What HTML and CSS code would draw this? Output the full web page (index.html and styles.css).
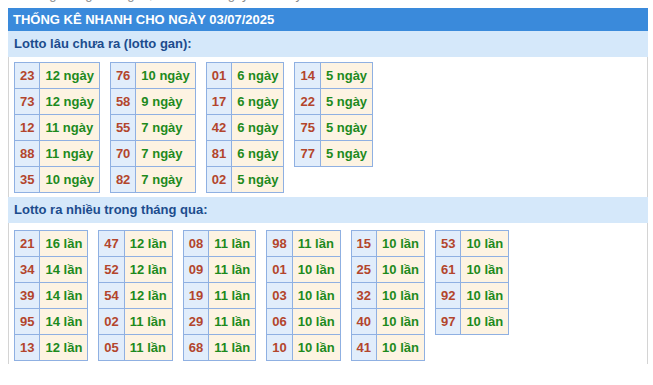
FILE: index.html
```html
<!DOCTYPE html>
<html lang="vi">
<head>
<meta charset="utf-8">
<title>Thống kê nhanh</title>
<link rel="stylesheet" href="styles.css">
</head>
<body>
<div class="crumb">Bảng thống kê lô gan, lô ra nhiều ngày hôm nay</div>
<div class="box">
  <div class="title">THỐNG KÊ NHANH CHO NGÀY 03/07/2025</div>
  <div class="sub">Lotto lâu chưa ra (lotto gan):</div>
  <div class="grid">
    <table class="tk">
      <tr><td class="n">23</td><td class="v">12 ngày</td></tr>
      <tr><td class="n">73</td><td class="v">12 ngày</td></tr>
      <tr><td class="n">12</td><td class="v">11 ngày</td></tr>
      <tr><td class="n">88</td><td class="v">11 ngày</td></tr>
      <tr><td class="n">35</td><td class="v">10 ngày</td></tr>
    </table>
    <table class="tk">
      <tr><td class="n">76</td><td class="v">10 ngày</td></tr>
      <tr><td class="n">58</td><td class="v">9 ngày</td></tr>
      <tr><td class="n">55</td><td class="v">7 ngày</td></tr>
      <tr><td class="n">70</td><td class="v">7 ngày</td></tr>
      <tr><td class="n">82</td><td class="v">7 ngày</td></tr>
    </table>
    <table class="tk">
      <tr><td class="n">01</td><td class="v">6 ngày</td></tr>
      <tr><td class="n">17</td><td class="v">6 ngày</td></tr>
      <tr><td class="n">42</td><td class="v">6 ngày</td></tr>
      <tr><td class="n">81</td><td class="v">6 ngày</td></tr>
      <tr><td class="n">02</td><td class="v">5 ngày</td></tr>
    </table>
    <table class="tk">
      <tr><td class="n">14</td><td class="v">5 ngày</td></tr>
      <tr><td class="n">22</td><td class="v">5 ngày</td></tr>
      <tr><td class="n">75</td><td class="v">5 ngày</td></tr>
      <tr><td class="n">77</td><td class="v">5 ngày</td></tr>
    </table>
  </div>
  <div class="sub">Lotto ra nhiều trong tháng qua:</div>
  <div class="grid grid-last">
    <table class="tk">
      <tr><td class="n">21</td><td class="v">16 lần</td></tr>
      <tr><td class="n">34</td><td class="v">14 lần</td></tr>
      <tr><td class="n">39</td><td class="v">14 lần</td></tr>
      <tr><td class="n">95</td><td class="v">14 lần</td></tr>
      <tr><td class="n">13</td><td class="v">12 lần</td></tr>
    </table>
    <table class="tk">
      <tr><td class="n">47</td><td class="v">12 lần</td></tr>
      <tr><td class="n">52</td><td class="v">12 lần</td></tr>
      <tr><td class="n">54</td><td class="v">12 lần</td></tr>
      <tr><td class="n">02</td><td class="v">11 lần</td></tr>
      <tr><td class="n">05</td><td class="v">11 lần</td></tr>
    </table>
    <table class="tk">
      <tr><td class="n">08</td><td class="v">11 lần</td></tr>
      <tr><td class="n">09</td><td class="v">11 lần</td></tr>
      <tr><td class="n">19</td><td class="v">11 lần</td></tr>
      <tr><td class="n">29</td><td class="v">11 lần</td></tr>
      <tr><td class="n">68</td><td class="v">11 lần</td></tr>
    </table>
    <table class="tk">
      <tr><td class="n">98</td><td class="v">11 lần</td></tr>
      <tr><td class="n">01</td><td class="v">10 lần</td></tr>
      <tr><td class="n">03</td><td class="v">10 lần</td></tr>
      <tr><td class="n">06</td><td class="v">10 lần</td></tr>
      <tr><td class="n">10</td><td class="v">10 lần</td></tr>
    </table>
    <table class="tk">
      <tr><td class="n">15</td><td class="v">10 lần</td></tr>
      <tr><td class="n">25</td><td class="v">10 lần</td></tr>
      <tr><td class="n">32</td><td class="v">10 lần</td></tr>
      <tr><td class="n">40</td><td class="v">10 lần</td></tr>
      <tr><td class="n">41</td><td class="v">10 lần</td></tr>
    </table>
    <table class="tk">
      <tr><td class="n">53</td><td class="v">10 lần</td></tr>
      <tr><td class="n">61</td><td class="v">10 lần</td></tr>
      <tr><td class="n">92</td><td class="v">10 lần</td></tr>
      <tr><td class="n">97</td><td class="v">10 lần</td></tr>
    </table>
  </div>
</div>
</body>
</html>
```
FILE: styles.css
```css
html, body {
  margin: 0;
  padding: 0;
  background: #fff;
}
body {
  padding: 0 8px;
  font-family: "Liberation Sans", Arial, sans-serif;
  font-size: 13px;
}
.crumb {
  margin-top: -13px;
  margin-bottom: 6px;
  line-height: 15px;
  height: 15px;
  color: #8a8a8a;
  white-space: nowrap;
  overflow: hidden;
  padding-left: 18px;
}
.box {
  width: 638px;
  border-left: 1px solid #d4d4d4;
  border-right: 1px solid #d4d4d4;
}
.title {
  margin: 0 -1px;
  height: 23px;
  line-height: 23px;
  padding-left: 5px;
  background: #3a8adb;
  color: #fff;
  font-weight: bold;
}
.sub {
  margin: 0 -1px;
  height: 26px;
  line-height: 26px;
  padding-left: 6px;
  background: #d5e8fa;
  color: #1c4c8d;
  font-weight: bold;
}
.grid {
  display: flex;
  align-items: flex-start;
  gap: 10px;
  padding: 5px 5px 4px;
}
.grid-last {
  padding-top: 7px;
  padding-bottom: 3px;
}
.tk {
  border-collapse: collapse;
  font-weight: bold;
}
.tk td {
  border: 1px solid #8fb0e2;
  padding: 0 5px;
  height: 25px;
  line-height: 15px;
  white-space: nowrap;
}
.tk .n {
  background: #e1edfb;
  color: #b3452c;
}
.tk .v {
  background: #fdf3e2;
  color: #1d8a1d;
}
```
